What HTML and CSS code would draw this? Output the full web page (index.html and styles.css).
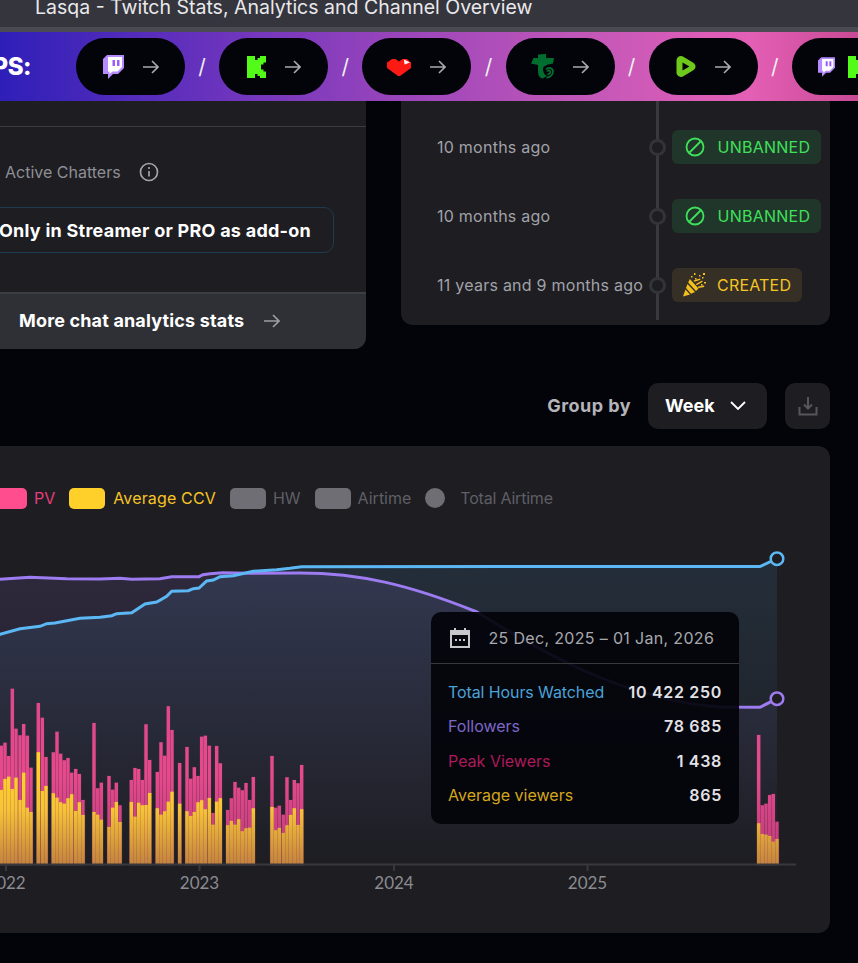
FILE: index.html
```html
<!DOCTYPE html>
<html lang="en">
<head>
<meta charset="utf-8">
<title>Lasqa - Twitch Stats</title>
<link rel="stylesheet" href="styles.css">
</head>
<body>
<header class="titlebar"><span class="title">Lasqa - Twitch Stats, Analytics and Channel Overview</span></header>
<div class="divider-top"></div>
<nav class="promo">
  <span class="promo-label">APPS:</span>
  <a class="pill">
    <svg class="ic-twitch" viewBox="0 0 21 24"><path fill="#b58bff" d="M4 0H21V13L15 19H10L5 24V19H0V4Z"/><path fill="#fff" d="M5 2H19V12L14.5 16.5H9.5L6.5 19V16.5H5Z"/><path fill="#9a5cff" d="M9.5 5H12V11H9.5ZM14 5H16.5V11H14Z"/></svg>
    <svg class="arrow" viewBox="0 0 16 14"><path d="M0 7H15M9 1L15 7L9 13"/></svg>
  </a>
  <span class="sep">/</span>
  <a class="pill">
    <svg class="ic-kick" viewBox="0 0 19 22"><path fill="#53fc18" d="M0 0H8V4H10.500V2H13V0H19V6.500H16.500V8.500H14V13.500H16.500V15.500H19V22H13V20H10.500V18H8V22H0Z"/></svg>
    <svg class="arrow" viewBox="0 0 16 14"><path d="M0 7H15M9 1L15 7L9 13"/></svg>
  </a>
  <span class="sep">/</span>
  <a class="pill">
    <svg class="ic-heart" viewBox="0 0 24 18"><path fill="#fe1a14" d="M0 4.500L5 1H8.500L12 3.500L15.500 1H20L24 4.500V10L13 18H11L0 10Z"/><path fill="#fff" d="M17 1.500L23 4.500L17.500 6.500Z"/></svg>
    <svg class="arrow" viewBox="0 0 16 14"><path d="M0 7H15M9 1L15 7L9 13"/></svg>
  </a>
  <span class="sep">/</span>
  <a class="pill">
    <svg class="ic-lizard" viewBox="0 0 23 25"><path fill="#006e2e" d="M7 0.500L15 0L15 4H23L22 9.500L17 10.500L13 12.500C11.500 14 12 16 12.500 18C13 20 14.500 21.500 16 21.800L12 24.500C8.500 24 7 21 7 17.500V11L0 9.500L2.500 4H7Z"/><path fill="none" stroke="#006e2e" stroke-width="1.800" d="M15 15.500C17.500 12.500 22 14 22 17.500C22 21 19 23.500 15.500 23.500M16.500 20C18.500 20.500 20 18.500 19 17C18 15.800 16.500 16.500 16.500 17.800"/></svg>
    <svg class="arrow" viewBox="0 0 16 14"><path d="M0 7H15M9 1L15 7L9 13"/></svg>
  </a>
  <span class="sep">/</span>
  <a class="pill">
    <svg class="ic-rumble" viewBox="0 0 20 23"><path fill="#6fc91c" stroke="#6fc91c" stroke-width="9" stroke-linejoin="round" d="M5 5.500L15 11.500L5 17.500Z"/><path fill="#03030a" d="M6.500 7.500L13.500 11.500L6.500 15.500Z"/></svg>
    <svg class="arrow" viewBox="0 0 16 14"><path d="M0 7H15M9 1L15 7L9 13"/></svg>
  </a>
  <span class="sep">/</span>
  <a class="pill pill-last">
    <svg class="ic-twitch-sm" viewBox="0 0 21 24"><path fill="#b58bff" d="M4 0H21V13L15 19H10L5 24V19H0V4Z"/><path fill="#fff" d="M5 2H19V12L14.500 16.500H9.500L6.500 19V16.500H5Z"/><path fill="#9a5cff" d="M9.500 5H12V11H9.500ZM14 5H16.500V11H14Z"/></svg>
    <svg class="ic-kick" viewBox="0 0 19 22"><path fill="#53fc18" d="M0 0H8V4H10.500V2H13V0H19V6.500H16.500V8.500H14V13.500H16.500V15.500H19V22H13V20H10.500V18H8V22H0Z"/></svg>
  </a>
</nav>

<main class="main">
  <section class="columns">
    <article class="card chat-card">
      <div class="chat-rule"></div>
      <div class="chat-metric">
        <span class="metric-label">Active Chatters</span>
        <svg class="info" viewBox="0 0 20 20"><circle cx="10" cy="10" r="8.500"/><path d="M10 9V14.500"/><circle class="info-dot" cx="10" cy="6" r="1.100"/></svg>
      </div>
      <div class="upsell">Only in Streamer or PRO as add-on</div>
      <div class="chat-footer">
        <span>More chat analytics stats</span>
        <svg class="arrow arrow-footer" viewBox="0 0 16 14"><path d="M0 7H15M9 1L15 7L9 13"/></svg>
      </div>
    </article>

    <article class="card timeline-card">
      <div class="timeline">
        <div class="t-row">
          <span class="t-time">10 months ago</span><span class="t-dot"></span>
          <span class="badge badge-green"><svg class="badge-ic" viewBox="0 0 20 20"><circle cx="10" cy="10" r="8.500"/><path d="M4.500 15.500L15.500 4.500"/></svg>UNBANNED</span>
        </div>
        <div class="t-row">
          <span class="t-time">10 months ago</span><span class="t-dot"></span>
          <span class="badge badge-green"><svg class="badge-ic" viewBox="0 0 20 20"><circle cx="10" cy="10" r="8.500"/><path d="M4.500 15.500L15.500 4.500"/></svg>UNBANNED</span>
        </div>
        <div class="t-row">
          <span class="t-time">11 years and 9 months ago</span><span class="t-dot"></span>
          <span class="badge badge-yellow"><svg class="badge-party" viewBox="0 0 23 24"><path fill="#f4c020" d="M0 23.500L2.500 16.500L7 21.500ZM3 15L4.500 11L12 19L8 20.800ZM5.200 9.500L6.800 6L15.500 15.500L13 18Z"/><path fill="#f4c020" d="M8 3h1.500v1.500H8zM11 0h1.500v2H11zM12 5h1.500v1.500H12zM16 2h1.500v1.500H16zM20 0h2v2h-2zM10.500 7.500L17 5.500l.5 1.300-6 2zM13 11l6-3.500.7 1.200-6 3.500zM18 11h1.500v1.500H18zM21 9h2v1.500h-2zM15 13.500l6-1 .3 1.400-6 1zM19 4h1.500v1.500H19z"/></svg>CREATED</span>
        </div>
      </div>
    </article>
  </section>

  <div class="toolbar">
    <span class="group-label">Group by</span>
    <div class="select"><span>Week</span><svg class="chev" viewBox="0 0 16 9"><path d="M1 1L8 8L15 1"/></svg></div>
    <div class="dl"><svg viewBox="0 0 20 20"><path d="M10 1V12M6 8.500L10 12.500L14 8.500M1.500 11V18.500H18.500V11"/></svg></div>
  </div>

  <section class="card chart-card">
    <div class="legend">
      <span class="swatch sw-pink"></span><span class="lg lg-pink">PV</span>
      <span class="swatch sw-yellow"></span><span class="lg lg-yellow">Average CCV</span>
      <span class="swatch sw-gray"></span><span class="lg">HW</span>
      <span class="swatch sw-gray"></span><span class="lg">Airtime</span>
      <span class="swatch sw-dot"></span><span class="lg lg-total">Total Airtime</span>
    </div>
    <svg class="plot" viewBox="-64 530 894 403">
      <defs>
        <linearGradient id="gBlue" gradientUnits="userSpaceOnUse" x1="0" y1="566" x2="0" y2="865"><stop offset="0" stop-color="#59b5f5" stop-opacity=".11"/><stop offset="1" stop-color="#59b5f5" stop-opacity="0"/></linearGradient>
        <linearGradient id="gPurple" gradientUnits="userSpaceOnUse" x1="0" y1="575" x2="0" y2="865"><stop offset="0" stop-color="#a67bf5" stop-opacity=".12"/><stop offset="1" stop-color="#a67bf5" stop-opacity="0"/></linearGradient>
        <linearGradient id="gPink" gradientUnits="userSpaceOnUse" x1="0" y1="20" x2="0" y2="460"><stop offset="0" stop-color="#e0478b"/><stop offset=".6" stop-color="#e64a8d"/><stop offset="1" stop-color="#c9407f"/></linearGradient>
        <linearGradient id="gYellow" gradientUnits="userSpaceOnUse" x1="0" y1="280" x2="0" y2="555"><stop offset="0" stop-color="#ffd12b"/><stop offset=".4" stop-color="#f5c436"/><stop offset="1" stop-color="#c2833d"/></linearGradient>
      </defs>
      <path fill="url(#gPurple)" d="M-64 580L0 579.300L30 577.300L66.700 578.700L100 579L120 578.300L131.700 579.300L160 578.700L171.700 576.700L199 576.700L203 574.700L210 573.700L223 572.700L250 573.300L300 573C360 573 410 585 477 612C530 645 620 700 720 707L760 707.300L777 698.700V865H-64Z"/>
      <path fill="url(#gBlue)" d="M-64 655L0 634.300L20 628.700L40 626.300L46.700 623.700L55 623L80 618.300L100 617.300L111.700 615.700L116.700 613.700L131.700 612.700L145 604L156.700 602L166.700 596.300L171.700 591.300L188.300 590.700L193.300 588.700L199 588L206.700 581L213.300 580L220 576.700L233.300 575.700L253.300 571.300L276.700 569.700L290 568.300L301.700 566.700L760 566.500L777 558.500V865H-64Z"/>
      <g transform="translate(0 680) scale(.33333)">
        <path fill="url(#gPink)" stroke="url(#gPink)" stroke-width=".5" d="M-1 197h10V555h-10zM10 188h10V555h-10zM21 228h10V555h-10zM32 26h10V555h-10zM43 146h10V555h-10zM55 166h10V555h-10zM66 132h10V555h-10zM77 167h10V555h-10zM88 263h10V555h-10zM110 69h10V555h-10zM122 113h10V555h-10zM133 231h10V555h-10zM155 217h10V555h-10zM166 155h10V555h-10zM177 221h10V555h-10zM188 241h10V555h-10zM199 234h10V555h-10zM210 278h10V555h-10zM222 267h10V555h-10zM233 282h10V555h-10zM244 360h10V555h-10zM277 129h10V555h-10zM288 325h10V555h-10zM299 308h10V555h-10zM322 288h10V555h-10zM333 329h10V555h-10zM344 308h10V555h-10zM355 376h10V555h-10zM389 300h10V555h-10zM400 264h10V555h-10zM411 267h10V555h-10zM422 300h10V555h-10zM433 133h10V555h-10zM444 240h10V555h-10zM467 276h10V555h-10zM478 187h10V555h-10zM489 227h10V555h-10zM500 79h10V555h-10zM511 150h10V555h-10zM534 249h10V555h-10zM556 201h10V555h-10zM567 296h10V555h-10zM578 262h10V555h-10zM589 288h10V555h-10zM600 170h10V555h-10zM611 167h10V555h-10zM623 197h10V555h-10zM634 399h10V555h-10zM645 198h10V555h-10zM656 250h10V555h-10zM678 390h10V555h-10zM689 355h10V555h-10zM700 306h10V555h-10zM711 323h10V555h-10zM722 331h10V555h-10zM733 309h10V555h-10zM744 360h10V555h-10zM755 291h10V555h-10zM811 228h10V555h-10zM822 383h10V555h-10zM833 377h10V555h-10zM845 404h10V555h-10zM856 292h10V555h-10zM867 360h10V555h-10zM878 300h10V555h-10zM889 310h10V555h-10zM900 255h10V555h-10zM2271 165h10V555h-10zM2282 376h10V555h-10zM2293 371h10V555h-10zM2304 345h10V555h-10zM2315 342h10V555h-10zM2326 425h10V555h-10z"/>
        <path fill="url(#gYellow)" stroke="url(#gYellow)" stroke-width=".5" d="M-1 330h10V555h-10zM10 297h10V555h-10zM21 290h10V555h-10zM32 327h10V555h-10zM43 293h10V555h-10zM55 360h10V555h-10zM66 278h10V555h-10zM77 383h10V555h-10zM88 396h10V555h-10zM110 217h10V555h-10zM122 333h10V555h-10zM133 318h10V555h-10zM155 340h10V555h-10zM166 353h10V555h-10zM177 367h10V555h-10zM188 371h10V555h-10zM199 355h10V555h-10zM210 343h10V555h-10zM222 393h10V555h-10zM233 367h10V555h-10zM244 405h10V555h-10zM277 396h10V555h-10zM288 404h10V555h-10zM299 419h10V555h-10zM322 441h10V555h-10zM333 383h10V555h-10zM344 366h10V555h-10zM355 426h10V555h-10zM389 366h10V555h-10zM400 410h10V555h-10zM411 368h10V555h-10zM422 376h10V555h-10zM433 375h10V555h-10zM444 339h10V555h-10zM467 385h10V555h-10zM478 404h10V555h-10zM489 394h10V555h-10zM500 365h10V555h-10zM511 335h10V555h-10zM534 371h10V555h-10zM556 394h10V555h-10zM567 408h10V555h-10zM578 396h10V555h-10zM589 367h10V555h-10zM600 361h10V555h-10zM611 388h10V555h-10zM623 354h10V555h-10zM634 434h10V555h-10zM645 365h10V555h-10zM656 355h10V555h-10zM678 436h10V555h-10zM689 423h10V555h-10zM700 434h10V555h-10zM711 418h10V555h-10zM722 454h10V555h-10zM733 445h10V555h-10zM744 443h10V555h-10zM755 385h10V555h-10zM811 381h10V555h-10zM822 451h10V555h-10zM833 444h10V555h-10zM845 459h10V555h-10zM856 436h10V555h-10zM867 405h10V555h-10zM878 385h10V555h-10zM889 435h10V555h-10zM900 388h10V555h-10zM2271 430h10V555h-10zM2282 462h10V555h-10zM2293 464h10V555h-10zM2304 468h10V555h-10zM2315 485h10V555h-10zM2326 477h10V555h-10z"/>
      </g>
      <path class="axis" d="M-64 864.500H796M6 865V871M199.500 865V871M394 865V871M587.500 865V871"/>
      <text class="yr" x="6" y="889">2022</text>
      <text class="yr" x="199.500" y="889">2023</text>
      <text class="yr" x="394" y="889">2024</text>
      <text class="yr" x="587.500" y="889">2025</text>
      <path class="ln ln-purple" d="M-64 580L0 579.300L30 577.300L66.700 578.700L100 579L120 578.300L131.700 579.300L160 578.700L171.700 576.700L199 576.700L203 574.700L210 573.700L223 572.700L250 573.300L300 573C360 573 410 585 477 612C530 645 620 700 720 707L760 707.300L777 698.700"/>
      <path class="ln ln-blue" d="M-64 655L0 634.300L20 628.700L40 626.300L46.700 623.700L55 623L80 618.300L100 617.300L111.700 615.700L116.700 613.700L131.700 612.700L145 604L156.700 602L166.700 596.300L171.700 591.300L188.300 590.700L193.300 588.700L199 588L206.700 581L213.300 580L220 576.700L233.300 575.700L253.300 571.300L276.700 569.700L290 568.300L301.700 566.700L760 566.500L777 558.500"/>
      <circle class="pt pt-blue" cx="777" cy="558.700" r="6.300"/>
      <circle class="pt pt-purple" cx="777" cy="698.700" r="6.300"/>
    </svg>
    <div class="tooltip">
      <div class="tt-head">
        <svg class="cal" viewBox="0 0 20 20"><path fill="#c8c8cc" d="M4 0h2v2h8V0h2v2h4v18H0V2h4ZM2 7v11h16V7Z"/><path fill="#c8c8cc" d="M5 11h2v2H5zM9 11h2v2H9zM13 11h2v2h-2z"/></svg>
        <span>25 Dec, 2025 – 01 Jan, 2026</span>
      </div>
      <div class="tt-body">
        <div class="tt-row"><span class="tt-blue">Total Hours Watched</span><b>10 422 250</b></div>
        <div class="tt-row"><span class="tt-purple">Followers</span><b>78 685</b></div>
        <div class="tt-row"><span class="tt-pink">Peak Viewers</span><b>1 438</b></div>
        <div class="tt-row"><span class="tt-yellow">Average viewers</span><b>865</b></div>
      </div>
    </div>
  </section>
</main>
</body>
</html>
```

FILE: styles.css
```css
* { box-sizing: border-box; }
html, body { margin: 0; height: 963px; overflow: hidden; background: #03030a; }
body { font-family: "Inter", "Liberation Sans", sans-serif; color: #fff; width: 858px; }

.titlebar { height: 27px; background: #35353d; padding-left: 35px; overflow: hidden; }
.title { display: block; font-family: "Inter", sans-serif; font-size: 19.5px; line-height: 15px; color: #e9e9ec; white-space: nowrap; }
.divider-top { height: 5px; background: #4a4a52; }

.promo { height: 69px; display: flex; align-items: center; margin-left: -59px; width: 917px; overflow: hidden;
  background: linear-gradient(90deg, #2e1fb8 6.500%, #6a33bd 30%, #9a45bb 50%, #c257b8 70%, #e45fb6 88%, #c84a94 100%); }
.promo-label { flex: 0 0 90px; text-align: right; font-family: "Inter", sans-serif; font-weight: 800; font-size: 24px; letter-spacing: -.5px; margin-right: 45px; }
.pill { flex: 0 0 109px; height: 57px; border-radius: 29px; background: #03030a; display: flex; align-items: center; justify-content: center; gap: 19px; }
.pill-last { justify-content: flex-start; padding-left: 26px; gap: 13px; }
.sep { flex: 0 0 34.200px; text-align: center; color: #eee; font-size: 21px; }
.arrow { width: 16px; height: 14px; fill: none; stroke: #a9a9ae; stroke-width: 1.600; }
.ic-twitch { width: 21px; height: 24px; }
.ic-twitch-sm { width: 17px; height: 20px; }
.ic-kick { width: 19px; height: 22px; }
.ic-heart { width: 24px; height: 18px; }
.ic-lizard { width: 23px; height: 25px; }
.ic-rumble { width: 20px; height: 23px; }

.main { width: 894px; margin-left: -64px; }
.columns { display: grid; grid-template-columns: 430px 429px; column-gap: 35px; align-items: start; }
.card { background: #1d1d22; }
.chat-card { border-radius: 0 0 12px 12px; height: 248px; padding-top: 25px; display: flex; flex-direction: column; overflow: hidden; }
.chat-rule { height: 1px; background: #3b3b40; flex: none; }
.chat-metric { height: 22px; margin-top: 34px; display: flex; align-items: center; padding-left: 69px; gap: 18px; }
.metric-label { font-size: 16px; color: #8f8f95; }
.info { width: 20px; height: 20px; fill: none; stroke: #a3a3a8; stroke-width: 1.700; }
.info-dot { fill: #a3a3a8; stroke: none; }
.upsell { height: 46px; width: 398px; margin-top: 24px; border: 1px solid #1f3b4e; border-radius: 10px; display: flex; align-items: center; justify-content: flex-end; padding-right: 22px; font-weight: 700; font-size: 18px; letter-spacing: .25px; color: #fff; white-space: nowrap; }
.chat-footer { height: 57px; margin-top: 39px; background: #2f3035; border-top: 2px solid #3c3d42; padding: 0 0 2px 83px; display: flex; align-items: center; gap: 20px; font-weight: 700; font-size: 18px; letter-spacing: .16px; }
.arrow-footer { stroke: #9d9da3; }

.timeline-card { border-radius: 0 0 12px 12px; height: 224px; padding: 29px 0 0 36px; }
.timeline { position: relative; display: flex; flex-direction: column; gap: 35px; }
.timeline::before { content: ""; position: absolute; left: 219px; top: -29px; width: 3px; height: 219px; background: #38393e; }
.t-row { position: relative; display: flex; align-items: center; height: 34px; }
.t-time { width: 212px; font-size: 16px; letter-spacing: .25px; color: #a2a2a8; white-space: nowrap; }
.t-dot { flex: none; width: 17px; height: 17px; border-radius: 50%; border: 3px solid #33343a; background: #1d1d22; margin-right: 6px; }
.badge { height: 34px; border-radius: 6px; padding: 0 11px 0 13px; display: inline-flex; align-items: center; gap: 12.500px; font-size: 16px; letter-spacing: .25px; }
.badge-green { background: #20362a; color: #3fe05a; }
.badge-yellow { background: #352f26; color: #f4c425; padding-left: 11px; padding-right: 11px; gap: 11px; letter-spacing: .2px; }
.badge-ic { width: 20px; height: 20px; fill: none; stroke: #3fe05a; stroke-width: 1.800; }
.badge-party { width: 23px; height: 24px; }

.toolbar { height: 46px; margin-top: 34px; margin-bottom: 17px; display: flex; justify-content: flex-end; align-items: center; }
.group-label { font-family: "Inter", sans-serif; font-weight: 700; font-size: 18px; letter-spacing: .45px; color: #b4b4b9; margin-right: 17px; padding-bottom: 2px; }
.select { width: 119px; height: 46px; background: #1d1d22; border-radius: 10px; display: flex; align-items: center; padding: 0 0 2px 17px; gap: 15px; font-family: "Inter", sans-serif; font-weight: 700; font-size: 18px; margin-right: 18px; }
.chev { width: 16px; height: 9px; fill: none; stroke: #fff; stroke-width: 1.800; }
.dl { width: 45px; height: 46px; background: #1d1d22; border-radius: 10px; display: flex; align-items: center; justify-content: center; }
.dl svg { width: 20px; height: 20px; fill: none; stroke: #56565b; stroke-width: 2; }

.chart-card { position: relative; height: 487px; border-radius: 12px; padding-top: 41px; overflow: hidden; }
.legend { height: 22px; display: flex; align-items: center; padding-left: 55px; font-size: 16px; color: #5f5f65; margin-bottom: 21px; }
.swatch { flex: none; width: 36px; height: 21px; border-radius: 5px; margin-right: 7px; }
.sw-pink { background: #ff4d8d; }
.sw-yellow { background: #ffd02a; margin-right: 8px; }
.sw-gray { background: #6e6e74; }
.sw-dot { width: 20px; height: 20px; border-radius: 50%; background: #6e6e74; margin-right: 15px; }
.lg { margin-right: 14px; white-space: nowrap; }
.lg-pink { color: #e43d7c; }
.lg-yellow { color: #f7c425; letter-spacing: .15px; }
.lg-total { letter-spacing: -.2px; }
.plot { display: block; width: 894px; height: 403px; }
.axis { fill: none; stroke: #38383d; stroke-width: 2; }
.yr { font-family: "Lato", sans-serif; font-size: 17px; fill: #8b8b90; text-anchor: middle; }
.ln { fill: none; stroke-width: 3; }
.ln-purple { stroke: #9d7bf0; }
.ln-blue { stroke: #5cb8f5; }
.pt { fill: #1d1d22; stroke-width: 2.500; }
.pt-blue { stroke: #5cb8f5; }
.pt-purple { stroke: #9d7bf0; }

.tooltip { position: absolute; left: 495px; top: 166px; width: 308px; height: 212px; border-radius: 10px; background: rgba(3,3,10,.93); }
.tt-head { height: 52px; border-bottom: 1px solid #38383d; display: flex; align-items: center; padding-left: 19px; gap: 18.500px; font-size: 16px; letter-spacing: .33px; color: #a8a8ad; }
.cal { width: 20px; height: 20px; }
.tt-body { padding: 11px 17px 0; }
.tt-row { height: 34.300px; display: flex; align-items: center; justify-content: space-between; font-size: 16px; }
.tt-row b { font-weight: 600; letter-spacing: .7px; color: #e2e2e6; }
.tt-blue { color: #4aa3d8; letter-spacing: -.1px; }
.tt-purple { color: #7d66c8; }
.tt-pink { color: #ad1a5a; }
.tt-yellow { color: #d4a61a; }
```
